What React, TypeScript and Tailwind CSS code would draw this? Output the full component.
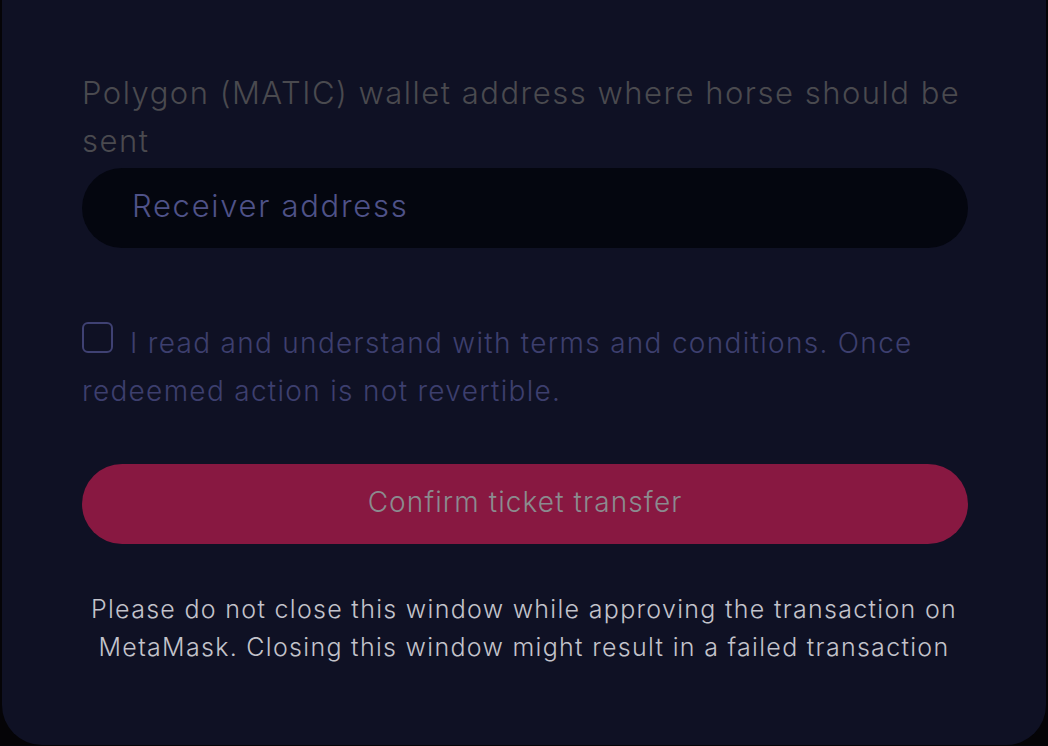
import React, { useState } from "react";

const font = { fontFamily: "Inter, 'Noto Sans', sans-serif" };

const RedeemTicketPanel: React.FC = () => {
  const [address, setAddress] = useState("");
  const [agreed, setAgreed] = useState(false);

  return (
    <div className="w-[1044px] ml-[2px] bg-[#0f1124] rounded-b-[40px] pt-[69px] pb-[79px] px-[80px]">
      <p className="text-[#4a4a4f] text-[31px] leading-[48px] font-light tracking-[1.5px]">
        Polygon (MATIC) wallet address where horse should be sent
      </p>
      <input
        value={address}
        onChange={(e) => setAddress(e.target.value)}
        placeholder="Receiver address"
        className="mt-[3px] w-[886px] h-[80px] rounded-full bg-[#04060f] px-[50px] pb-[5px] text-[31px] tracking-[1.7px] font-light text-[#55588f] placeholder:text-[#4f5288] outline-none"
        style={font}
      />

      <p className="mt-[71px] text-[28px] leading-[48px] font-light tracking-[1.3px] text-[#3d3f6e]">
        <span
          onClick={() => setAgreed(!agreed)}
          className="inline-block align-baseline w-[31px] h-[31px] mr-[17px] border-2 border-[#3f4173] rounded-[6px] cursor-pointer"
        />
        I read and understand with terms and conditions. Once redeemed action is not revertible.
      </p>

      <button className="mt-[49px] w-[886px] h-[80px] rounded-full bg-[#881841] pb-[5px] text-[28px] tracking-[1.1px] font-light text-[#8b8b8f]">
        Confirm ticket transfer
      </button>

      <p className="mt-[46px] text-center text-[25px] leading-[38px] font-light tracking-[1.3px] text-[#c3c3cb]">
        Please do not close this window while approving the transaction on MetaMask. Closing this window might result in a failed transaction
      </p>
    </div>
  );
};

export default function App() {
  return (
    <div className="w-[1048px] h-[746px] overflow-hidden bg-[#050407]" style={font}>
      <RedeemTicketPanel />
    </div>
  );
}
